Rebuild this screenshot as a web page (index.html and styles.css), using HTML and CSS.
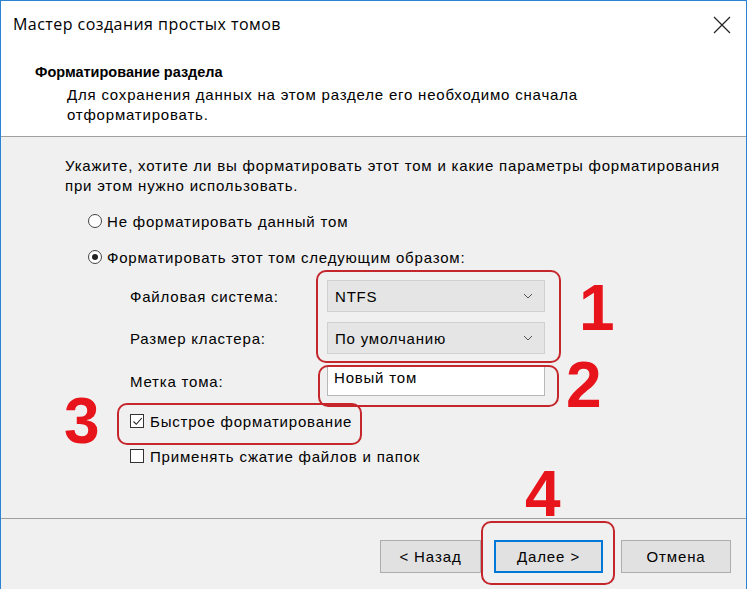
FILE: index.html
```html
<!DOCTYPE html>
<html lang="ru">
<head>
  <meta charset="UTF-8">
  <title>Мастер создания простых томов</title>
  <link rel="stylesheet" href="styles.css">
</head>
<body>

  <div class="okno">
    <div class="zagolovok">
      <span class="zagolovok-tekst">Мастер создания простых томов</span>
      <svg class="zakryt" width="18" height="18" viewBox="0 0 18 18">
        <path d="M1 1 L17 17 M17 1 L1 17" stroke="#222" stroke-width="1.2" fill="none"/>
      </svg>
    </div>

    <div class="shapka">
      <h1>Форматирование раздела</h1>
      <p>Для сохранения данных на этом разделе его необходимо сначала<br>отформатировать.</p>
    </div>

    <div class="telo">
      <p class="vopros">Укажите, хотите ли вы форматировать этот том и какие параметры форматирования<br>при этом нужно использовать.</p>

      <div class="variant">
        <span class="radio"></span>
        <span>Не форматировать данный том</span>
      </div>
      <div class="variant">
        <span class="radio vybran"></span>
        <span>Форматировать этот том следующим образом:</span>
      </div>

      <div class="stroka stroka-1">
        <span class="metka">Файловая система:</span>
        <div class="spisok">
          <span>NTFS</span>
          <svg width="10" height="6" viewBox="0 0 10 6"><path d="M1 1 L5 5 L9 1" stroke="#555" fill="none"/></svg>
        </div>
      </div>
      <div class="stroka stroka-2">
        <span class="metka">Размер кластера:</span>
        <div class="spisok">
          <span>По умолчанию</span>
          <svg width="10" height="6" viewBox="0 0 10 6"><path d="M1 1 L5 5 L9 1" stroke="#555" fill="none"/></svg>
        </div>
      </div>
      <div class="stroka stroka-3">
        <span class="metka">Метка тома:</span>
        <div class="pole">Новый том</div>
      </div>

      <div class="flazhok">
        <span class="kvadrat">
          <svg width="11" height="11" viewBox="0 0 11 11"><path d="M1.5 5.5 L4.3 8.3 L9.8 2" stroke="#222" stroke-width="1.1" fill="none"/></svg>
        </span>
        <span>Быстрое форматирование</span>
      </div>
      <div class="flazhok flazhok-2">
        <span class="kvadrat"></span>
        <span>Применять сжатие файлов и папок</span>
      </div>
    </div>

    <div class="podval">
      <button class="knopka knopka-nazad">&lt; Назад</button>
      <button class="knopka knopka-dalee">Далее &gt;</button>
      <button class="knopka knopka-otmena">Отмена</button>
    </div>

    <!-- пометки поверх окна -->
    <div class="ramka ramka-1"></div>
    <div class="ramka ramka-2"></div>
    <div class="ramka ramka-3"></div>
    <div class="ramka ramka-4"></div>
    <span class="cifra cifra-1">1</span>
    <span class="cifra cifra-2">2</span>
    <span class="cifra cifra-3">3</span>
    <span class="cifra cifra-4">4</span>
  </div>

</body>
</html>
```

FILE: styles.css
```css
body {
  margin: 0;
  font-family: "Liberation Sans", Arial, sans-serif;
  font-size: 15px;
  letter-spacing: 0.8px;
  color: #000;
  background-color: #fff;
}

.okno {
  position: relative;
  width: 745px;
  height: 588px;
  border: 1px solid #2a84d2;
  border-bottom: none;
  background-color: #f0f0f0;
}

.zagolovok {
  height: 47px;
  background-color: #fff;
  display: flex;
  align-items: center;
  padding-left: 12px;
}

.zagolovok-tekst {
  font-family: "Open Sans", "Noto Sans", sans-serif;
  font-size: 16px;
  letter-spacing: 0.45px;
  margin-top: -1px;
}

.zakryt {
  margin-left: auto;
  margin-right: 15px;
}

.shapka {
  height: 88px;
  background-color: #fff;
  border-bottom: 1px solid #a0a0a0;
}

.shapka h1 {
  margin: 0;
  padding: 14px 0 0 34px;
  font-size: 14.5px;
  font-weight: bold;
  letter-spacing: 0;
  line-height: 20px;
}

.shapka p {
  margin: 3px 0 0 66px;
  line-height: 20px;
}

.telo {
  height: 382px;
  padding-top: 19px;
  box-sizing: border-box;
  border-bottom: 1px solid #a0a0a0;
}

.vopros {
  margin: 0 0 0 64px;
  line-height: 20px;
}

.variant {
  display: flex;
  align-items: center;
  gap: 5px;
  height: 20px;
  margin: 15px 0 0 87px;
}

.variant + .variant {
  margin-top: 16px;
}

.radio {
  width: 14px;
  height: 14px;
  border: 1px solid #444;
  border-radius: 50%;
  background-color: #fff;
  box-sizing: border-box;
  position: relative;
}

.radio.vybran::after {
  content: "";
  position: absolute;
  left: 3px;
  top: 3px;
  width: 6px;
  height: 6px;
  border-radius: 50%;
  background-color: #222;
}

.stroka {
  display: flex;
  align-items: center;
  margin-left: 129px;
}

.stroka-1 {
  margin-top: 13px;
}

.stroka-2 {
  margin-top: 10px;
}

.stroka-3 {
  margin-top: 12px;
}

.metka {
  width: 197px;
}

.spisok {
  width: 218px;
  height: 32px;
  box-sizing: border-box;
  background-color: #e5e5e5;
  border: 1px solid #d0d0d0;
  display: flex;
  align-items: center;
  justify-content: space-between;
  padding: 0 11px 0 7px;
}

.pole {
  width: 218px;
  height: 30px;
  box-sizing: border-box;
  background-color: #fff;
  border: 1px solid #b8b8b8;
  padding: 2px 0 0 6px;
}

.flazhok {
  display: flex;
  align-items: center;
  gap: 6px;
  height: 20px;
  margin: 15px 0 0 129px;
}

.kvadrat {
  width: 14px;
  height: 14px;
  box-sizing: border-box;
  border: 1px solid #333;
  background-color: #fff;
  display: flex;
  align-items: center;
  justify-content: center;
}

.podval {
  display: flex;
  padding: 21px 0 0 379px;
}

.knopka {
  font-family: "Liberation Sans", Arial, sans-serif;
  font-size: 15px;
  letter-spacing: 0.9px;
  height: 33px;
  background-color: #e1e1e1;
  border: 1px solid #adadad;
  color: #000;
  padding: 0;
}

.knopka-nazad {
  width: 101px;
}

.knopka-dalee {
  width: 109px;
  margin-left: 13px;
  border: 2px solid #0078d7;
}

.knopka-otmena {
  width: 110px;
  margin-left: 18px;
}

.ramka {
  position: absolute;
  border: 2px solid #c5262c;
  border-radius: 10px;
}

.ramka-1 {
  left: 315px;
  top: 269px;
  width: 241px;
  height: 89px;
}

.ramka-2 {
  left: 317px;
  top: 364px;
  width: 237px;
  height: 38px;
}

.ramka-3 {
  left: 116px;
  top: 402px;
  width: 241px;
  height: 38px;
}

.ramka-4 {
  left: 480px;
  top: 520px;
  width: 130px;
  height: 60px;
}

.cifra {
  position: absolute;
  font-family: "Liberation Sans", Arial, sans-serif;
  font-weight: bold;
  font-size: 64px;
  letter-spacing: 0;
  line-height: 1;
  color: #e8141c;
}

.cifra-1 {
  left: 578px;
  top: 275px;
}

.cifra-2 {
  left: 565px;
  top: 352px;
}

.cifra-3 {
  left: 63px;
  top: 388px;
}

.cifra-4 {
  left: 524px;
  top: 461px;
}
```
